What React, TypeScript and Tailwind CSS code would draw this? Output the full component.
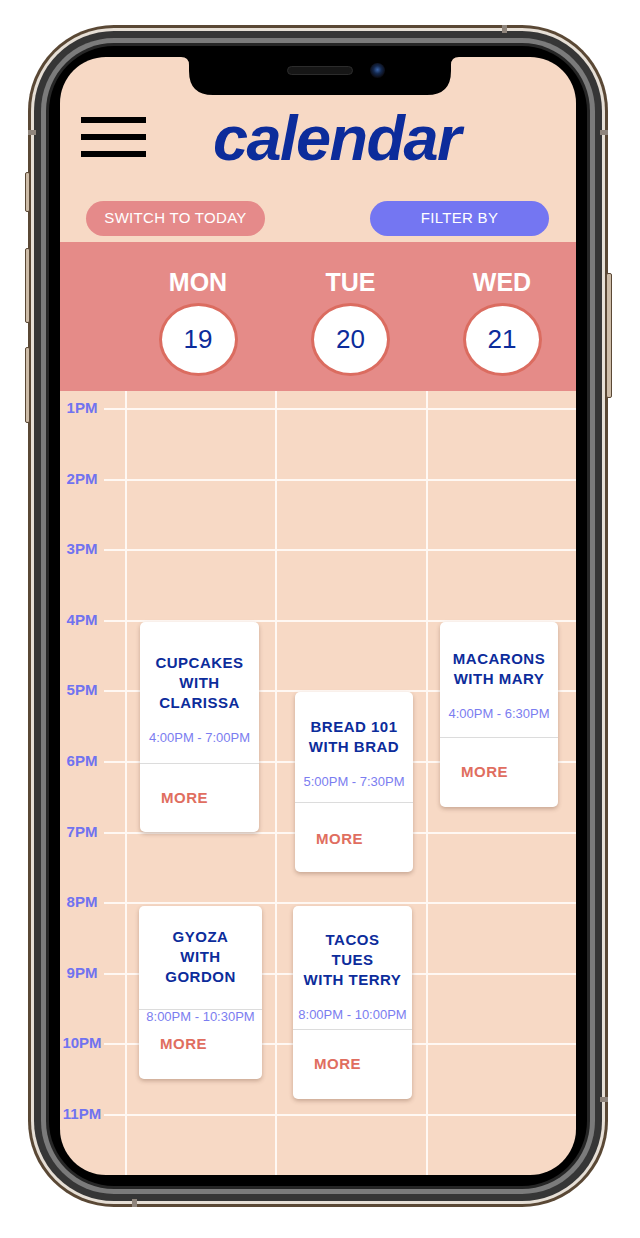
import { Fragment } from "react";

const hours = ["1PM", "2PM", "3PM", "4PM", "5PM", "6PM", "7PM", "8PM", "9PM", "10PM", "11PM"];

const days = [
  { name: "MON", num: "19" },
  { name: "TUE", num: "20" },
  { name: "WED", num: "21" },
];

type Ev = {
  title: string[];
  time: string;
  box: string;
  head: string;
  timeCls: string;
  foot: string;
  timeBelow?: boolean;
};

const events: Ev[] = [
  {
    title: ["CUPCAKES", "WITH", "CLARISSA"],
    time: "4:00PM - 7:00PM",
    box: "left-[80px] top-[231px] w-[119px] h-[210px]",
    head: "pt-[31px] pb-[17px]",
    timeCls: "mt-[17px]",
    foot: "pt-[26px]",
  },
  {
    title: ["BREAD 101", "WITH BRAD"],
    time: "5:00PM - 7:30PM",
    box: "left-[235px] top-[301px] w-[118px] h-[180px]",
    head: "pt-[25px] pb-[12px]",
    timeCls: "mt-[17px]",
    foot: "pt-[28px]",
  },
  {
    title: ["MACARONS", "WITH MARY"],
    time: "4:00PM - 6:30PM",
    box: "left-[380px] top-[231px] w-[118px] h-[185px]",
    head: "pt-[27px] pb-[15px]",
    timeCls: "mt-[17px]",
    foot: "pt-[26px]",
  },
  {
    title: ["GYOZA", "WITH", "GORDON"],
    time: "8:00PM - 10:30PM",
    box: "left-[79px] top-[515px] w-[123px] h-[173px]",
    head: "pt-[21px] pb-[22px]",
    timeCls: "",
    foot: "pt-[13px]",
    timeBelow: true,
  },
  {
    title: ["TACOS", "TUES", "WITH TERRY"],
    time: "8:00PM - 10:00PM",
    box: "left-[233px] top-[515px] w-[119px] h-[193px]",
    head: "pt-[24px] pb-[6px]",
    timeCls: "mt-[17px]",
    foot: "pt-[26px]",
  },
];

function EventCard({ ev }: { ev: Ev }) {
  const time = (
    <div className="whitespace-nowrap text-center text-[13px] leading-[16px] text-[#7b7df0]">{ev.time}</div>
  );
  return (
    <div
      className={`absolute ${ev.box} flex flex-col rounded-[5px] bg-white shadow-[0_2px_4px_rgba(90,50,30,0.3)]`}
    >
      <div className={`border-b border-[#dcdcdc] ${ev.head}`}>
        <div className="text-center text-[15px] font-bold leading-[20px] tracking-[0.5px] text-[#0c2c9b]">
          {ev.title.map((t) => (
            <div key={t} className="whitespace-nowrap">
              {t}
            </div>
          ))}
        </div>
        {!ev.timeBelow && <div className={ev.timeCls}>{time}</div>}
      </div>
      {ev.timeBelow && (
        <div className="whitespace-nowrap text-center text-[13px] leading-[13px] text-[#7b7df0]">{ev.time}</div>
      )}
      <div
        className={`pl-[21px] text-[15px] font-bold leading-none tracking-[0.5px] text-[#e06e60] ${ev.foot}`}
      >
        MORE
      </div>
    </div>
  );
}

function Screen() {
  return (
    <div className="relative flex h-[1118px] w-[516px] flex-col overflow-hidden rounded-[46px] bg-[#f7d9c5]">
      {/* notch */}
      <svg className="absolute left-[121px] top-0" width="278" height="38" viewBox="0 0 278 38">
        <path d="M0 0 Q8 0 8 8 V14 Q8 38 32 38 H246 Q270 38 270 14 V8 Q270 0 278 0 Z" fill="#000" />
      </svg>
      <div className="absolute left-[227px] top-[9px] h-[9px] w-[66px] rounded-full border border-[#2c2c2c] bg-[#161616]" />
      <div className="absolute left-[310px] top-[6px] h-[15px] w-[15px] rounded-full bg-[radial-gradient(circle_at_50%_45%,#3a63a8_0%,#14284d_35%,#0b0b12_70%)]" />

      {/* top bar */}
      <div className="flex h-[144px] items-start">
        <div className="ml-[21px] mt-[60px] flex w-[65px] flex-col gap-[11px]">
          <div className="h-[6px] bg-black" />
          <div className="h-[6px] bg-black" />
          <div className="h-[6px] bg-black" />
        </div>
        <div className="ml-[67px] mt-[50px] text-[63px] font-bold italic leading-none tracking-[-1.5px] text-[#0c2c9b]">
          calendar
        </div>
      </div>

      {/* buttons */}
      <div className="flex h-[35px] justify-between pl-[26px] pr-[27px]">
        <button className="flex h-[35px] w-[179px] items-center justify-center rounded-full bg-[#e58a8a] text-[15px] tracking-[0.3px] text-white">
          SWITCH TO TODAY
        </button>
        <button className="flex h-[35px] w-[179px] items-center justify-center rounded-full bg-[#7476f2] text-[15px] tracking-[0.3px] text-white">
          FILTER BY
        </button>
      </div>

      {/* day header */}
      <div className="mt-[6px] grid h-[149px] grid-cols-[63px_150px_155px_148px] bg-[#e58b88]">
        <div />
        {days.map((d) => (
          <div key={d.name} className="flex flex-col items-center pt-[28px]">
            <div className="text-[25px] font-bold leading-none text-white">{d.name}</div>
            <div className="mt-[8px] flex h-[73px] w-[79px] items-center justify-center rounded-[50%] border-[3px] border-[#db6c60] bg-white text-[26px] text-[#0c2c9b]">
              {d.num}
            </div>
          </div>
        ))}
      </div>

      {/* time grid */}
      <div className="relative grid flex-1 grid-cols-[44px_21px_150px_151px_150px] grid-rows-[17px_repeat(10,70.6px)_1fr]">
        <div />
        <div />
        <div className="border-l-2 border-[#fff8f3]" />
        <div className="border-l-2 border-[#fff8f3]" />
        <div className="border-l-2 border-[#fff8f3]" />
        {hours.map((h) => (
          <Fragment key={h}>
            <div className="-mt-[8px] whitespace-nowrap text-center text-[15px] font-bold leading-[16px] text-[#7073f0]">
              {h}
            </div>
            <div className="border-t-2 border-[#fff8f3]" />
            <div className="border-l-2 border-t-2 border-[#fff8f3]" />
            <div className="border-l-2 border-t-2 border-[#fff8f3]" />
            <div className="border-l-2 border-t-2 border-[#fff8f3]" />
          </Fragment>
        ))}
        {events.map((ev) => (
          <EventCard key={ev.title.join(" ")} ev={ev} />
        ))}
      </div>
    </div>
  );
}

export default function App() {
  return (
    <div className="relative h-[1238px] w-[640px] overflow-hidden bg-white font-['Liberation_Sans',Arial,sans-serif]">
      {/* side buttons */}
      <div className="absolute left-[25px] top-[172px] h-[40px] w-[5px] rounded-[2px] border border-[#5a4835] bg-[#cdbca8]" />
      <div className="absolute left-[25px] top-[248px] h-[75px] w-[5px] rounded-[2px] border border-[#5a4835] bg-[#cdbca8]" />
      <div className="absolute left-[25px] top-[347px] h-[76px] w-[5px] rounded-[2px] border border-[#5a4835] bg-[#cdbca8]" />
      <div className="absolute left-[606px] top-[273px] h-[125px] w-[6px] rounded-[2px] border border-[#5a4835] bg-[#cdbca8]" />

      <div className="ml-[28px] mt-[25px] w-[580px] rounded-[86px] bg-[#5a4835] p-[3px]">
        <div className="rounded-[83px] bg-[#e6dfd6] p-[3px]">
          <div className="rounded-[80px] bg-[#363636] p-[7px]">
            <div className="rounded-[73px] bg-[#7b7b7b] p-[5px]">
              <div className="rounded-[68px] bg-[#262626] p-[3px]">
                <div className="rounded-[65px] bg-black p-[11px]">
                  <Screen />
                </div>
              </div>
            </div>
          </div>
        </div>
      </div>

      {/* antenna marks */}
      <div className="absolute left-[502px] top-[25px] h-[8px] w-[5px] bg-[#8f857c]" />
      <div className="absolute left-[28px] top-[130px] h-[5px] w-[8px] bg-[#8f857c]" />
      <div className="absolute left-[600px] top-[130px] h-[5px] w-[8px] bg-[#8f857c]" />
      <div className="absolute left-[600px] top-[1097px] h-[5px] w-[8px] bg-[#8f857c]" />
      <div className="absolute left-[132px] top-[1199px] h-[8px] w-[5px] bg-[#8f857c]" />
    </div>
  );
}
